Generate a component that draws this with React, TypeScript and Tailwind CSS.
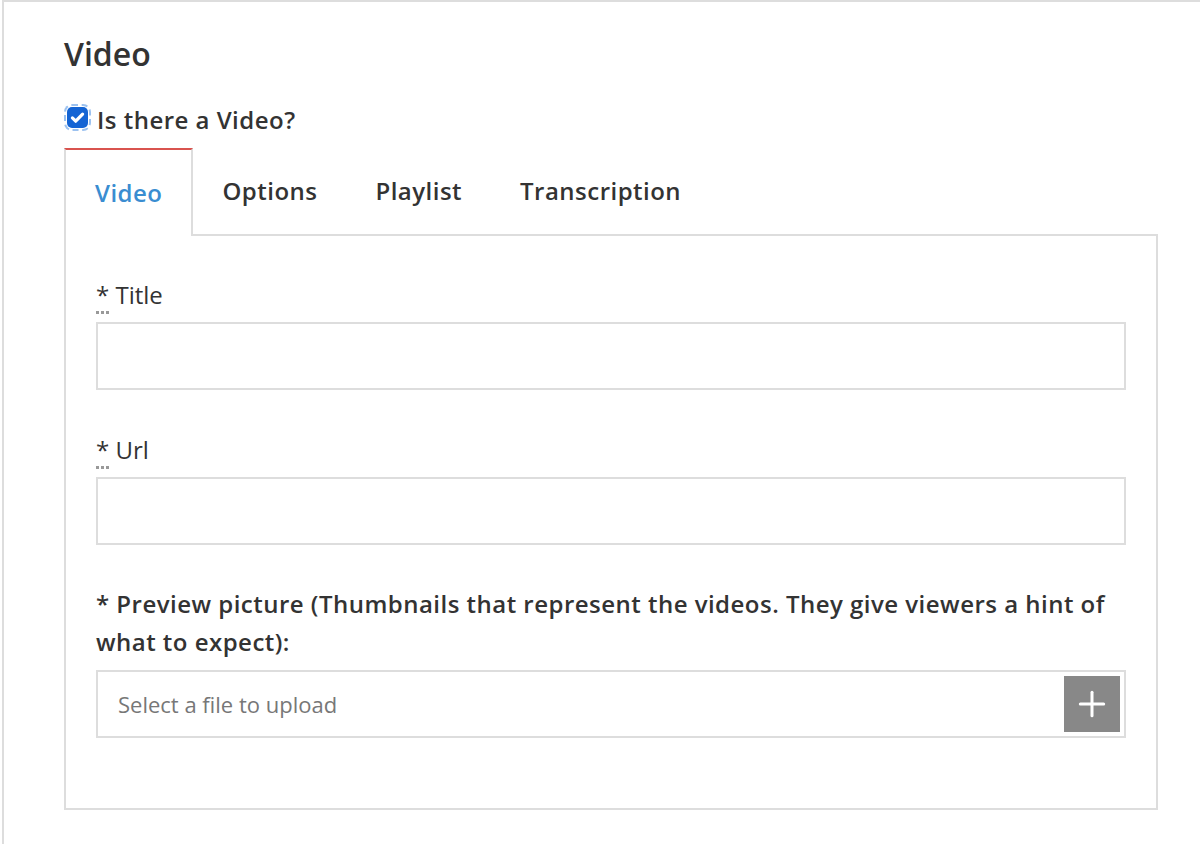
import { Plus } from 'lucide-react';

const tabs = ['Video', 'Options', 'Playlist', 'Transcription'];

function Label({ text }: { text: string }) {
    return (
        <label className="block text-[24px] leading-[30px] text-[#333] mb-[12px]">
            <abbr title="required" className="no-underline border-b-[3px] border-dotted border-[#999] leading-none">*</abbr> {text}
        </label>
    );
}

export default function App() {
    return (
        <div className="min-h-screen bg-white pl-[2px]" style={{ fontFamily: '"Open Sans", "Noto Sans", sans-serif' }}>
            <div className="min-h-[844px] border-l-2 border-t-2 border-[#dddddd] pl-[60px] pt-[30px]">
                <h2 className="text-[32px] leading-[44px] font-semibold text-[#333]">Video</h2>

                <label className="flex items-center mt-[31px] h-[26px]">
                    <span className="ml-[3px] mb-[6px] w-[21px] h-[21px] rounded-[5px] bg-[#1464d4] flex items-center justify-center outline-2 outline-dashed outline-offset-1 outline-[#9cc2f0]">
                        <svg width="17" height="17" viewBox="0 0 16 16" fill="none">
                            <path d="M3.2 8.4l3.1 3.1L12.8 4.8" stroke="white" strokeWidth="3" strokeLinecap="round" strokeLinejoin="round" />
                        </svg>
                    </span>
                    <span className="ml-[9px] text-[24px] font-semibold tracking-[0.02em] text-[#333]">Is there a Video?</span>
                </label>

                <div className="w-[1094px] mt-[15px]">
                    <div className="flex h-[86px] items-stretch">
                        {tabs.map((t, i) => (
                            <div
                                key={t}
                                className={
                                    i === 0
                                        ? 'relative z-10 -mb-[2px] h-[88px] flex items-center px-[29px] border-t-2 border-x-2 border-t-[#d9534f] border-x-[#dddddd] bg-white text-[24px] font-semibold tracking-[0.02em] text-[#3a8dd1]'
                                        : 'flex items-center px-[29px] text-[24px] font-semibold tracking-[0.02em] text-[#333]'
                                }
                            >
                                {t}
                            </div>
                        ))}
                    </div>

                    <div className="border-2 border-[#dddddd] px-[30px] pt-[44px] pb-[70px]">
                        <Label text="Title" />
                        <input type="text" className="block w-full h-[68px] border-2 border-[#dddddd] outline-none" />

                        <div className="mt-[45px]">
                            <Label text="Url" />
                            <input type="text" className="block w-full h-[68px] border-2 border-[#dddddd] outline-none" />
                        </div>

                        <p className="mt-[40px] mb-[9px] text-[24px] leading-[38px] font-semibold tracking-[0.02em] text-[#333]">
                            * Preview picture (Thumbnails that represent the videos. They give viewers a hint of what to expect):
                        </p>
                        <div className="flex items-center h-[68px] border-2 border-[#dddddd] pl-[20px] pr-[4px]">
                            <span className="flex-1 text-[22px] text-[#777]">Select a file to upload</span>
                            <button className="w-[56px] h-[56px] bg-[#888888] flex items-center justify-center">
                                <Plus size={40} color="white" strokeWidth={1.8} />
                            </button>
                        </div>
                    </div>
                </div>
            </div>
        </div>
    );
}
